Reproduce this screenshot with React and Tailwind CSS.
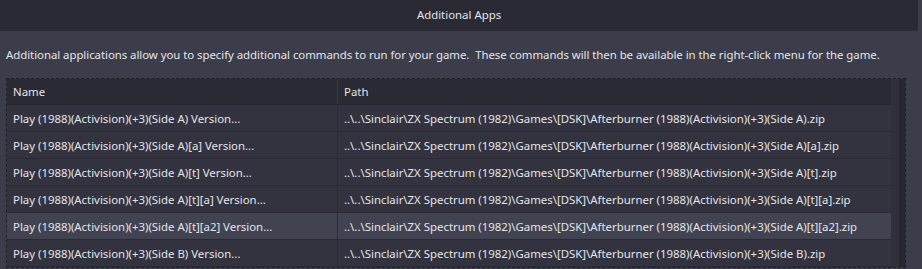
const rows = [
  ["Play (1988)(Activision)(+3)(Side A) Version...", "..\\..\\Sinclair\\ZX Spectrum (1982)\\Games\\[DSK]\\Afterburner (1988)(Activision)(+3)(Side A).zip"],
  ["Play (1988)(Activision)(+3)(Side A)[a] Version...", "..\\..\\Sinclair\\ZX Spectrum (1982)\\Games\\[DSK]\\Afterburner (1988)(Activision)(+3)(Side A)[a].zip"],
  ["Play (1988)(Activision)(+3)(Side A)[t] Version...", "..\\..\\Sinclair\\ZX Spectrum (1982)\\Games\\[DSK]\\Afterburner (1988)(Activision)(+3)(Side A)[t].zip"],
  ["Play (1988)(Activision)(+3)(Side A)[t][a] Version...", "..\\..\\Sinclair\\ZX Spectrum (1982)\\Games\\[DSK]\\Afterburner (1988)(Activision)(+3)(Side A)[t][a].zip"],
  ["Play (1988)(Activision)(+3)(Side A)[t][a2] Version...", "..\\..\\Sinclair\\ZX Spectrum (1982)\\Games\\[DSK]\\Afterburner (1988)(Activision)(+3)(Side A)[t][a2].zip"],
  ["Play (1988)(Activision)(+3)(Side B) Version...", "..\\..\\Sinclair\\ZX Spectrum (1982)\\Games\\[DSK]\\Afterburner (1988)(Activision)(+3)(Side B).zip"],
];

export default function App() {
  return (
    <div className="w-[922px] h-[269px] overflow-hidden bg-[#3c3d4a] text-[#e4e4e8] text-[11.4px] font-['Noto_Sans',sans-serif] whitespace-nowrap">
      <div className="w-[918px] h-[31px] bg-[#2a2a35] flex items-center justify-center pb-[1px]">
        Additional Apps
      </div>
      <p className="h-[47px] pl-[6px] pt-[16px] leading-[16px] tracking-[-0.04px]">
        Additional applications allow you to specify additional commands to run for your game.&nbsp; These commands will then be available in the right-click menu for the game.
      </p>
      <div className="ml-[6px] w-[900px] border border-dashed border-[#1f1f27] flex">
        <div className="flex-1">
          <div className="flex h-[26px] bg-[#2a2a35] border-b border-[#26262f]">
            <div className="w-[331px] pl-[6px] flex items-center border-r border-[#3a3b47]">Name</div>
            <div className="flex-1 pl-[6px] flex items-center">Path</div>
          </div>
          {rows.map(([name, path], i) => (
            <div
              key={i}
              className={`flex h-[27px] border-b border-[#292a33] ${i === 4 ? "bg-[#424350]" : "bg-[#32333e]"}`}
            >
              <div className="w-[331px] pl-[6px] pt-[1px] flex items-center border-r border-[#2a2b34] overflow-hidden">{name}</div>
              <div className="flex-1 pl-[6px] pt-[1px] flex items-center overflow-hidden">{path}</div>
            </div>
          ))}
        </div>
        <div className="w-[8px] bg-[#30303c]" />
        <div className="w-[6px] bg-[#26262f]" />
      </div>
    </div>
  );
}
